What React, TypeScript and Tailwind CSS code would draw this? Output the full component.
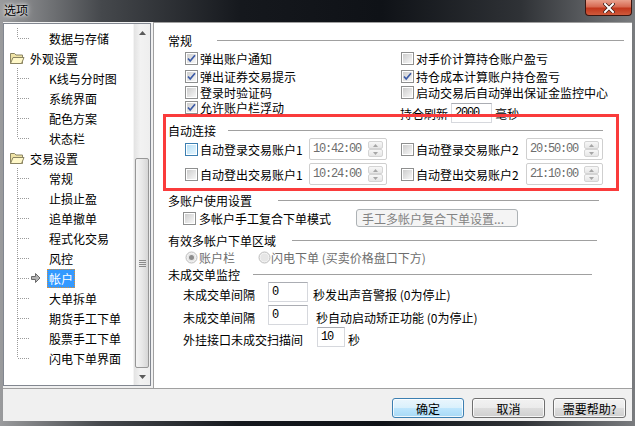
import React from "react";

type TreeItem = { label: string; folder?: boolean; last?: boolean; selected?: boolean };

const treeItems: TreeItem[] = [
  { label: "数据与存储", last: true },
  { label: "外观设置", folder: true },
  { label: "K线与分时图" },
  { label: "系统界面" },
  { label: "配色方案" },
  { label: "状态栏", last: true },
  { label: "交易设置", folder: true },
  { label: "常规" },
  { label: "止损止盈" },
  { label: "追单撤单" },
  { label: "程式化交易" },
  { label: "风控" },
  { label: "帐户", selected: true },
  { label: "大单拆单" },
  { label: "期货手工下单" },
  { label: "股票手工下单" },
  { label: "闪电下单界面", last: true },
];

function Folder() {
  return (
    <svg width="16" height="14" viewBox="0 0 16 14" className="shrink-0">
      <path d="M1.5 2.5h4l1.5 1.5h6.5v8.5h-12z" fill="#efe3a6" stroke="#8a8462" />
      <path d="M1.5 12.5l2.5-6h11l-2.5 6z" fill="#fff8c8" stroke="#8a8462" />
    </svg>
  );
}

function TreeRow({ item }: { item: TreeItem }) {
  if (item.folder) {
    return (
      <div className="flex h-[20px] items-center">
        <span className="ml-[5px] mr-[5px] flex">
          <Folder />
        </span>
        <span>{item.label}</span>
      </div>
    );
  }
  return (
    <div className="flex h-[20px] items-center">
      <svg width="43" height="20" className="shrink-0">
        <line x1="13.5" y1="0" x2="13.5" y2={item.last ? 10 : 20} stroke="#9a9a9a" strokeDasharray="1 1" />
        <line x1="14" y1="10.5" x2="25" y2="10.5" stroke="#9a9a9a" strokeDasharray="1 1" />
        {item.selected && (
          <path d="M27.5 8.5h4v-3l4.5 4.5-4.5 4.5v-3h-4z" fill="#b4b4b4" stroke="#6a6a6a" />
        )}
      </svg>
      {item.selected ? (
        <span className="h-[19px] px-[1px] leading-[17px] border border-dotted border-[#d8903a] bg-[#3399ff] text-white">
          {item.label}
        </span>
      ) : (
        <span className="px-[2px]">{item.label}</span>
      )}
    </div>
  );
}

function Arrow({ up }: { up?: boolean }) {
  return (
    <svg width="7" height="4" viewBox="0 0 7 4">
      <path d={up ? "M0 4L3.5 0 7 4z" : "M0 0h7L3.5 4z"} fill="#5a5a5a" />
    </svg>
  );
}

function Scrollbar() {
  return (
    <div className="w-[17px] h-full flex flex-col bg-[linear-gradient(90deg,#e3e3e3,#f2f2f2_40%,#eeeeee)] border-l border-[#f4f4f4]">
      <div className="h-[17px] flex items-center justify-center">
        <Arrow up />
      </div>
      <div className="flex-1 flex flex-col justify-end">
        <div className="h-[210px] mx-[1px] rounded-[2px] border border-[#979797] bg-[linear-gradient(90deg,#f4f4f4,#e8e8e8_50%,#d6d6d6)] flex flex-col items-center justify-center gap-[1px]">
          <div className="w-[7px] h-px bg-[#8a8a8a]" />
          <div className="w-[7px] h-px bg-[#8a8a8a]" />
          <div className="w-[7px] h-px bg-[#8a8a8a]" />
          <div className="w-[7px] h-px bg-[#8a8a8a]" />
        </div>
      </div>
      <div className="h-[17px] flex items-center justify-center">
        <Arrow />
      </div>
    </div>
  );
}

function Check({ checked, hot }: { checked?: boolean; hot?: boolean }) {
  return (
    <span
      className={
        "relative w-[13px] h-[13px] shrink-0 border p-[1px] bg-white " +
        (hot ? "border-[#3c7fb1]" : "border-[#8e8f8f]")
      }
    >
      <span
        className={
          "block w-full h-full " +
          (hot
            ? "bg-[linear-gradient(135deg,#b9e0f6,#e6f5fd)]"
            : "bg-[linear-gradient(135deg,#cdcdcd,#f7f7f7)]")
        }
      />
      {checked && (
        <svg width="13" height="13" viewBox="0 0 13 13" className="absolute -left-px -top-px">
          <path d="M3 6.5l2.2 2.5L10 3.2" fill="none" stroke="#3b5aa6" strokeWidth="1.7" />
        </svg>
      )}
    </span>
  );
}

function Radio({ checked }: { checked?: boolean }) {
  return (
    <svg width="13" height="13" viewBox="0 0 13 13" className="shrink-0">
      <circle cx="6.5" cy="6.5" r="5.5" fill="#f4f4f4" stroke="#bcbcbc" />
      <circle cx="6.5" cy="6.5" r="4" fill="#e6e6e6" />
      {checked && <circle cx="6.5" cy="6.5" r="2.5" fill="#8c8c8c" />}
    </svg>
  );
}

function Field({ value, className }: { value: string; className: string }) {
  return (
    <div
      className={
        "h-[20px] shrink-0 border border-[#d6d8dd] border-t-[#abadb3] bg-white flex items-center pl-[3px] font-['Liberation_Mono',monospace] text-[12px] tracking-[-1.2px] " +
        className
      }
    >
      {value}
    </div>
  );
}

function TimeField({ value, className }: { value: string; className: string }) {
  return (
    <div
      className={
        "h-[22px] shrink-0 rounded-[2px] border border-[#cfcfcf] bg-white flex items-center pl-[3px] text-[#6d6d6d] font-['Liberation_Mono',monospace] text-[12px] tracking-[-1.2px] " +
        className
      }
    >
      <span>{value}</span>
      <div className="ml-auto mr-[3px] flex flex-col">
        <div className="w-[15px] h-[8px] border border-[#d4d4d4] rounded-[2px] bg-[linear-gradient(#f7f7f7,#e6e6e6)] flex items-center justify-center">
          <svg width="5" height="3" viewBox="0 0 5 3">
            <path d="M0 3L2.5 0 5 3z" fill="#a6a6a6" />
          </svg>
        </div>
        <div className="w-[15px] h-[8px] border border-[#d4d4d4] rounded-[2px] bg-[linear-gradient(#f7f7f7,#e6e6e6)] flex items-center justify-center">
          <svg width="5" height="3" viewBox="0 0 5 3">
            <path d="M0 0h5L2.5 3z" fill="#a6a6a6" />
          </svg>
        </div>
      </div>
    </div>
  );
}

function Header({ label, className, lineClass }: { label: string; className: string; lineClass: string }) {
  return (
    <div className={"flex items-center h-[16px] pl-[14px] " + className}>
      <span>{label}</span>
      <div className={"flex-1 h-px bg-[#a0a0a0] " + lineClass} />
    </div>
  );
}

function Btn({ label, primary, className }: { label: string; primary?: boolean; className: string }) {
  return (
    <div
      className={
        "h-[20px] rounded-[3px] border flex items-center justify-center shadow-[inset_0_0_0_1px_rgba(255,255,255,0.8)] " +
        (primary
          ? "border-[#3c7fb1] bg-[linear-gradient(#eaf6fd_0%,#d9f0fc_50%,#bee6fd_51%,#a7d9f5_100%)] "
          : "border-[#707070] bg-[linear-gradient(#f2f2f2_0%,#ebebeb_50%,#dddddd_51%,#cfcfcf_100%)] ") +
        className
      }
    >
      {label}
    </div>
  );
}

export default function App() {
  return (
    <div className="relative w-[635px] h-[426px] overflow-hidden bg-[linear-gradient(90deg,#9a9b9d_0%,#45484c_16%,#15181d_38%,#0f1217_60%,#2f3236_82%,#7a7c7f_100%)] font-['Noto_Sans_CJK_SC',sans-serif] text-[12px] leading-[13px] text-black">
      {/* 标题栏 */}
      <div className="h-[22px] flex justify-between items-start">
        <span className="pl-[4px] pt-[3px] [text-shadow:0_0_6px_#ffffff,0_0_3px_#ffffff]">选项</span>
        <div className="mr-[3px] w-[47px] h-[16px] rounded-b-[4px] border border-t-0 border-[#3b1610] bg-[linear-gradient(#e9a08c_0%,#d76a52_45%,#c2371c_55%,#cf5a3c_100%)] flex items-center justify-center">
          <svg width="12" height="10" viewBox="0 0 12 10">
            <path d="M2 1l8 8M10 1l-8 8" stroke="#3a1a14" strokeWidth="3.4" strokeLinecap="square" />
            <path d="M2 1l8 8M10 1l-8 8" stroke="#ffffff" strokeWidth="2" strokeLinecap="square" />
          </svg>
        </div>
      </div>

      <div className="ml-[3px] w-[629px] h-[399px] bg-[#f0f0f0] flex flex-col">
        <div className="h-[366px] flex">
          {/* 左侧树 */}
          <div className="mt-[1px] w-[148px] h-[363px] border border-[#828790] bg-white flex">
            <div className="flex-1 pt-[4px] overflow-hidden">
              {treeItems.map((item) => (
                <TreeRow key={item.label} item={item} />
              ))}
            </div>
            <Scrollbar />
          </div>

          {/* 右侧设置 */}
          <div className="ml-[2px] flex-1 border-l border-t border-[#a0a0a0] bg-white flex flex-col">
            <Header label="常规" className="mt-[8px] h-[18px]" lineClass="ml-[25px] mr-[8px]" />
            <div className="h-[18px] pl-[31px] flex items-center">
              <div className="w-[216px] flex items-center gap-[2px]">
                <Check checked />
                <span>弹出账户通知</span>
              </div>
              <div className="flex items-center gap-[2px]">
                <Check />
                <span>对手价计算持仓账户盈亏</span>
              </div>
            </div>
            <div className="h-[18px] pl-[31px] flex items-center">
              <div className="w-[216px] flex items-center gap-[2px]">
                <Check checked />
                <span>弹出证券交易提示</span>
              </div>
              <div className="flex items-center gap-[2px]">
                <Check checked />
                <span>持仓成本计算账户持仓盈亏</span>
              </div>
            </div>
            <div className="h-[15px] pl-[31px] flex items-center">
              <div className="w-[216px] flex items-center gap-[2px]">
                <Check />
                <span>登录时验证码</span>
              </div>
              <div className="flex items-center gap-[2px]">
                <Check />
                <span>启动交易后自动弹出保证金监控中心</span>
              </div>
            </div>
            <div className="h-[15px] pl-[31px] flex items-start">
              <div className="w-[216px] h-[15px] flex items-center gap-[2px]">
                <Check checked />
                <span>允许账户栏浮动</span>
              </div>
              <div className="mt-[3px] -ml-[1px] h-[20px] flex items-center">
                <span>持仓刷新</span>
                <Field value="2000" className="ml-[3px] w-[41px]" />
                <span className="ml-[3px]">毫秒</span>
              </div>
            </div>

            <Header label="自动连接" className="mt-[7px]" lineClass="ml-[12px] mr-[29px]" />
            <div className="h-[22px] pl-[31px] flex items-center">
              <Check hot />
              <span className="ml-[2px] w-[109px]">自动登录交易账户1</span>
              <TimeField value="10:42:00" className="w-[78px]" />
              <span className="ml-[14px] flex">
                <Check />
              </span>
              <span className="ml-[2px] w-[110px]">自动登录交易账户2</span>
              <TimeField value="20:50:00" className="w-[77px]" />
            </div>
            <div className="mt-[3px] h-[22px] pl-[31px] flex items-center">
              <Check />
              <span className="ml-[2px] w-[109px]">自动登出交易账户1</span>
              <TimeField value="10:24:00" className="w-[78px]" />
              <span className="ml-[14px] flex">
                <Check />
              </span>
              <span className="ml-[2px] w-[110px]">自动登出交易账户2</span>
              <TimeField value="21:10:00" className="w-[77px]" />
            </div>

            <Header label="多账户使用设置" className="mt-[7px]" lineClass="ml-[26px] mr-[33px]" />
            <div className="h-[20px] pl-[29px] flex items-center">
              <Check />
              <span className="ml-[3px]">多帐户手工复合下单模式</span>
              <div className="ml-[25px] w-[162px] h-[18px] rounded-[3px] border border-[#adb2b5] bg-[#f4f4f4] flex items-center pl-[5px] text-[#838383]">
                手工多帐户复合下单设置...
              </div>
            </div>

            <Header label="有效多帐户下单区域" className="mt-[4px]" lineClass="ml-[16px] mr-[35px]" />
            <div className="h-[18px] pl-[31px] flex items-center text-[#6d6d6d]">
              <Radio checked />
              <span className="ml-[1px]">账户栏</span>
              <span className="ml-[23px] flex">
                <Radio />
              </span>
              <span className="ml-[0px]">闪电下单 (买卖价格盘口下方)</span>
            </div>

            <Header label="未成交单监控" className="" lineClass="ml-[13px] mr-[40px]" />
            <div className="h-[20px] pl-[29px] flex items-center">
              <span className="mt-[4px]">未成交单间隔</span>
              <Field value="0" className="ml-[13px] w-[40px]" />
              <span className="ml-[5px] mt-[4px]">秒发出声音警报 (0为停止)</span>
            </div>
            <div className="mt-[3px] h-[20px] pl-[29px] flex items-center">
              <span className="mt-[4px]">未成交单间隔</span>
              <Field value="0" className="ml-[13px] w-[40px]" />
              <span className="ml-[8px] mt-[4px]">秒自动启动矫正功能 (0为停止)</span>
            </div>
            <div className="mt-[2px] h-[20px] pl-[29px] flex items-center">
              <span className="mt-[4px]">外挂接口未成交扫描间</span>
              <Field value="10" className="ml-[14px] w-[28px]" />
              <span className="ml-[3px] mt-[4px]">秒</span>
            </div>
          </div>
        </div>

        {/* 底部按钮 */}
        <div className="h-[33px] border-t border-[#a0a0a0] flex justify-end items-start pt-[9px] pr-[6px] gap-[8px]">
          <Btn label="确定" primary className="w-[72px]" />
          <Btn label="取消" className="w-[73px]" />
          <Btn label="需要帮助?" className="w-[73px]" />
        </div>
      </div>

      {/* 红色标注框 */}
      <div className="absolute left-[163px] top-[114px] w-[456px] h-[77px] border-[3px] border-[#fa3b3b] pointer-events-none" />
    </div>
  );
}
